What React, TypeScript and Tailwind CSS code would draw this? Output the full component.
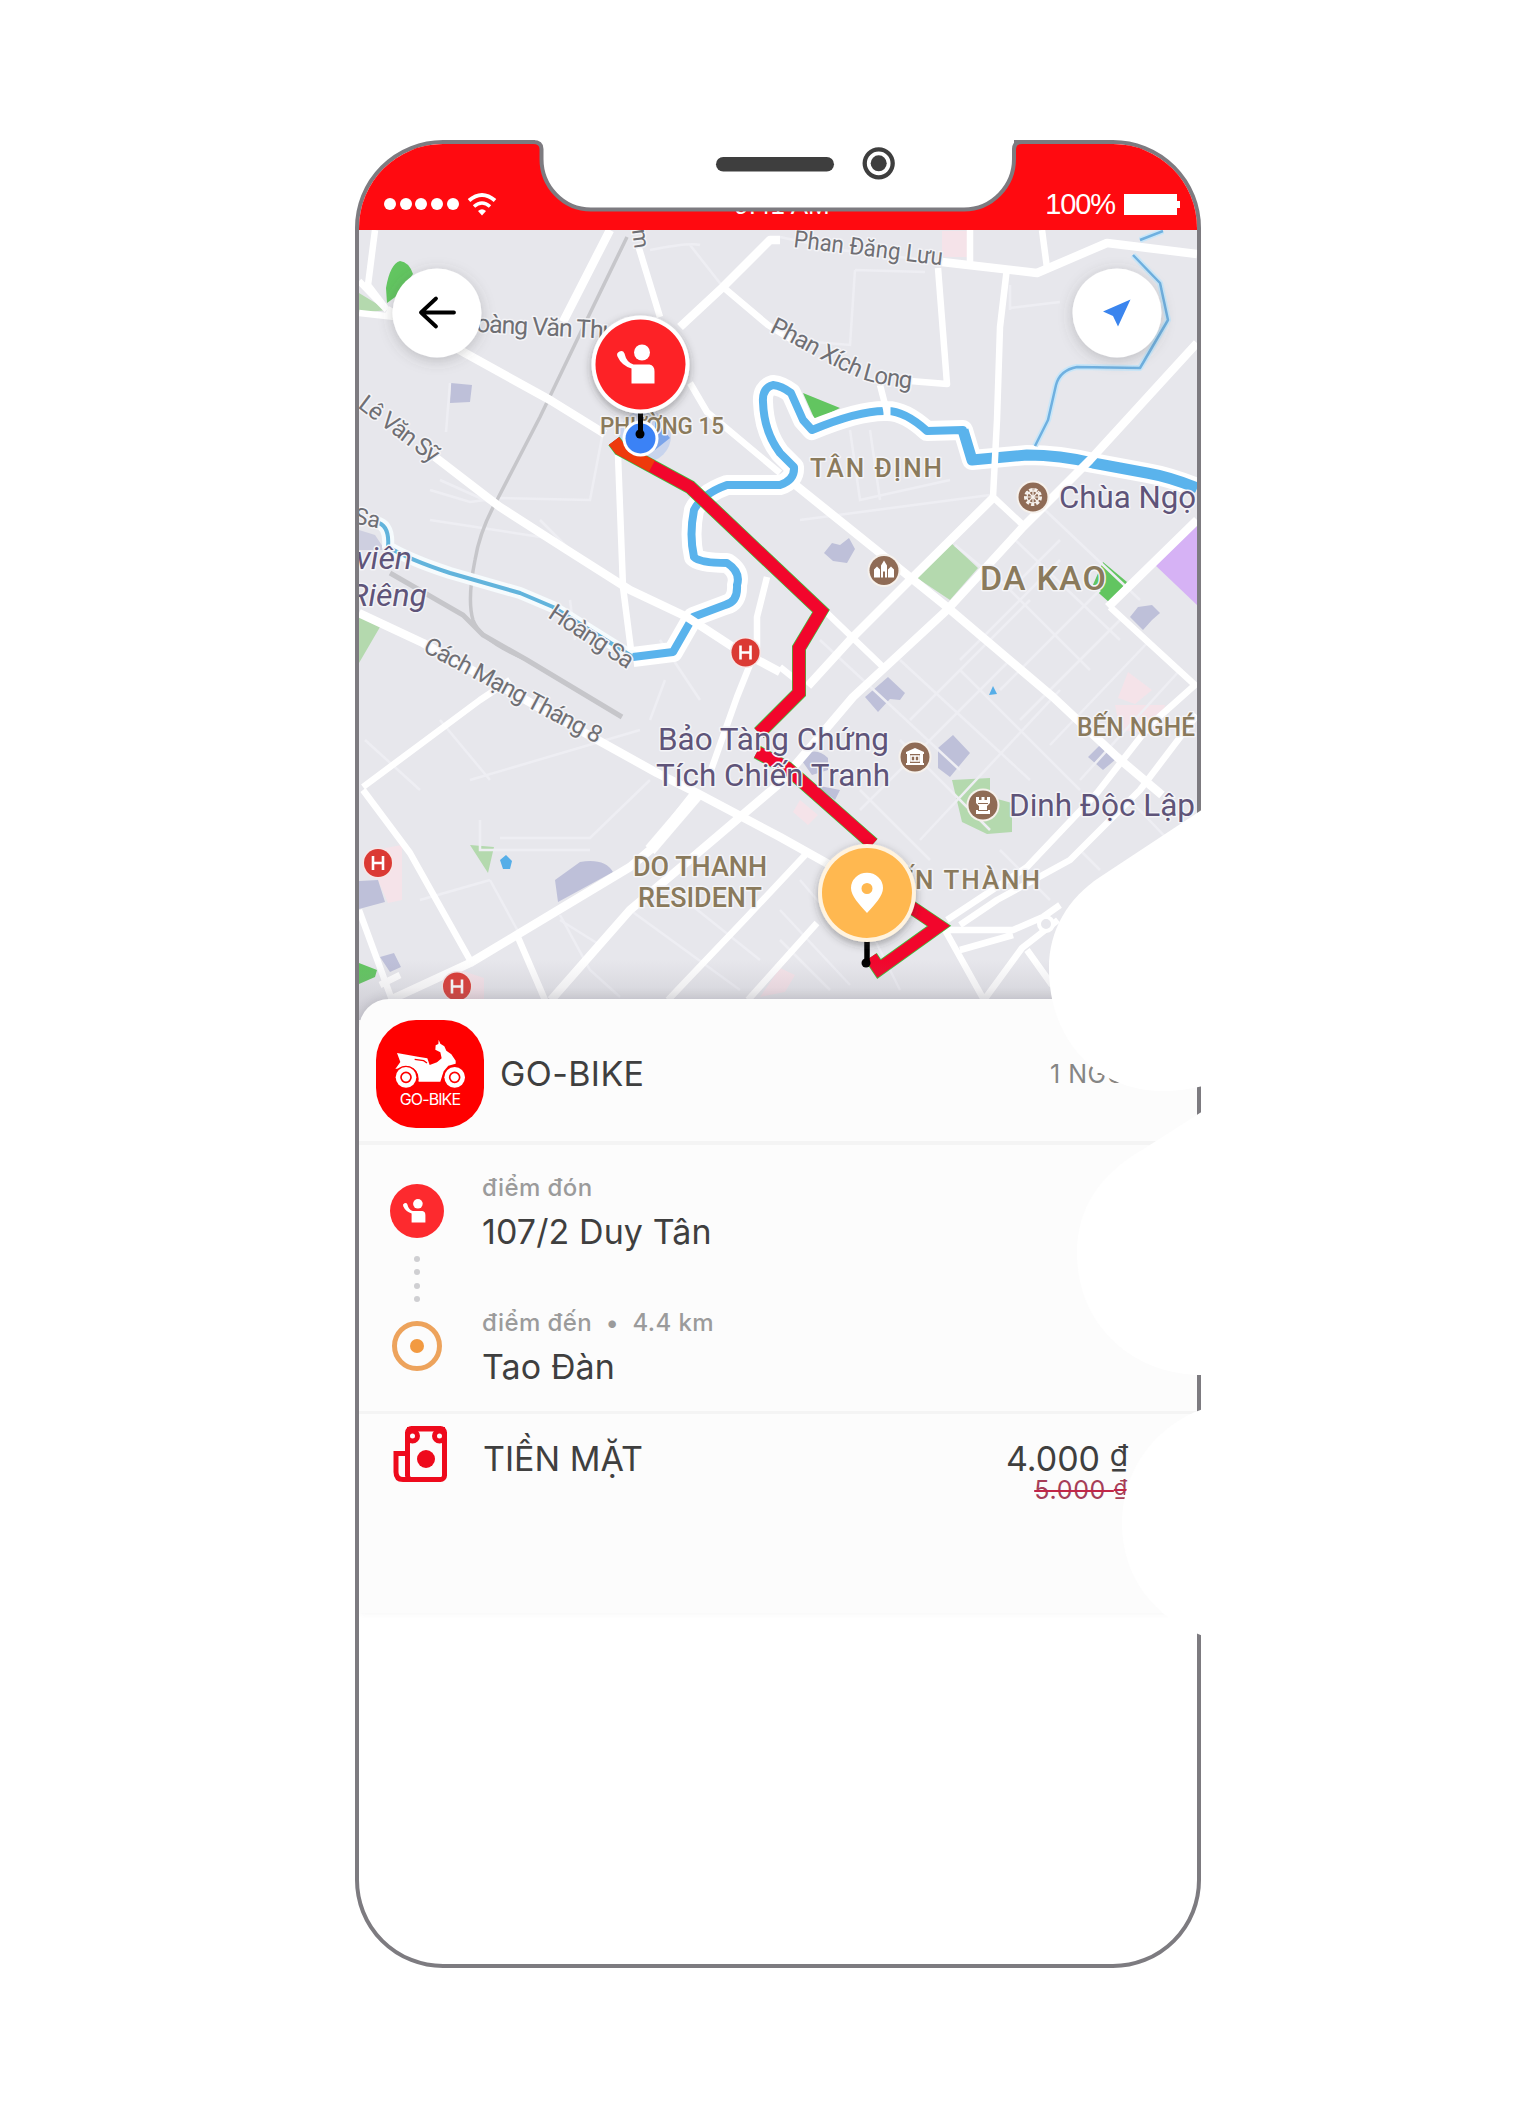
import React from "react";

const MINOR = [
  "M700 245Q690 242 650 250M690 245L723 287M780 237L840 250L942 262M855 270L850 345L790 340M855 270L925 272",
  "M1010 308L1060 302M1010 285V310M430 490L470 502L500 498L590 500L603 432M450 383L446 432M500 507L440 480",
  "M955 545L985 570M1010 535L1120 640M1045 510L1140 600M1060 560L960 660M1100 590L1000 690M990 570L1090 670M1030 600L910 720M1060 540L1010 590",
  "M820 640L960 770M900 660L1030 780M960 670L1080 790M1010 660L860 810M1060 690L920 840M900 740L990 830M860 790L930 860",
  "M470 780L640 730M650 780L590 838H500M480 820V850H590M490 880L520 935M420 900L490 880M560 915L590 970L620 997M630 910L740 990M660 880L760 960",
  "M780 910L850 985M800 880L830 915M840 870L900 990M780 940L830 990M440 720L490 780M365 740L420 790M560 920L600 945",
  "M850 430L860 500L950 480M870 430L880 500M800 520L990 495M1120 620L1020 720M1150 640L1050 745M1180 670L1080 780M1130 800L1197 870",
  "M540 520L580 560M430 520L560 540M570 600L575 640M660 640L700 700M665 680L650 720M1000 850L1050 900M1080 850L1100 870",
];

const THIN = [
  "M375 230L368 285L387 310M359 281L387 310M359 313L395 317",
  "M638 245L660 317M690 383L707 412L780 473",
  "M723 287L768 325L800 345M970 230V262M1042 230L1047 268M938 268L947 384L910 381M880 385L887 412",
  "M1007 268L1000 327L997 420L993 497L1023 525",
  "M618 455L623 587L631 650M767 577L757 617V647L737 697L710 773",
  "M510 680L480 700L363 787M363 790L410 853L470 960M359 910L392 1000M517 935L545 1000M380 985L400 975",
  "M827 613L883 667M780 667L800 683M1110 607L1195 685L1150 725L1097 793L1027 867L947 920M1197 715L1140 790L1070 860L997 900L960 925",
  "M945 930H1013L1043 917L1060 905M945 930L984 1000L1022 948L1058 920M960 950L1013 935M1027 950L1052 985",
  "M807 853L747 917L668 1000M817 923L748 1000",
];

const THICK = [
  "M610 230L563 322M780 240H770L723 287L680 327M387 310L465 353L550 400L605 434",
  "M942 262L1037 273L1107 243L1197 254",
  "M1197 343L1090 460L1023 527L947 610L853 697L780 783L693 857L630 910L551 1000",
  "M435 457L500 507L567 550L630 590L687 617L733 647L780 672",
  "M359 613L423 643L603 743L657 773L697 793L780 837L830 865",
  "M793 483L880 553L947 607L1053 697L1117 757L1162 795",
  "M994 497L913 577L850 640L808 686M1197 520L1108 607",
  "M695 793L650 850L630 867L520 933L470 963L390 1000",
];

const RIVER =
  "M1197 488Q1170 477 1147 473L1093 463Q1060 455 1027 455L972 460L963 430L927 431Q905 411 887 411Q860 410 812 430L803 420L791 393Q782 386 773 385Q762 388 763 402Q764 432 780 453L794 467Q795 480 780 485H727Q702 494 694 510Q689 535 694 557Q700 563 727 563Q741 572 737 585Q738 602 725 605L693 617L673 652L633 657";
const STREAM = "M376 522Q390 525 388 547Q410 560 450 573L520 593L553 607L633 657";
const CREEK =
  "M1163 231L1140 240M1133 255L1160 283L1168 320L1140 368L1077 367Q1060 370 1056 385L1048 420L1035 446";

const ROUTE_A = "M614 441L620 449L690 487L821 611L799 648V693L759 733";
const ROUTE_B = "M757 752L787 768L873 844";
const ROUTE_C = "M905 903L939 926L879 969L871 957";

function MapLabels() {
  return (
    <g fontFamily="Roboto, sans-serif" stroke="#f4f4f7" strokeWidth="3" strokeLinejoin="round" paintOrder="stroke">
      <g fill="#6f6f74" fontSize="24">
        <text x="793" y="247" textLength="150" lengthAdjust="spacingAndGlyphs" transform="rotate(7 793 247)">Phan Đăng Lưu</text>
        <path id="xichlong" d="M769 332C800 346 838 371 868 381Q890 387 920 389" fill="none" stroke="none" />
        <text><textPath href="#xichlong" textLength="155">Phan Xích Long</textPath></text>
        <text x="459" y="331" fontSize="25" textLength="157" transform="rotate(3 459 331)">Hoàng Văn Thụ</text>
        <text x="357" y="407" textLength="94" transform="rotate(37 357 407)">Lê Văn Sỹ</text>
        <text x="353" y="523" fontSize="23" transform="rotate(12 353 523)">Sa</text>
        <text x="547" y="617" textLength="96" transform="rotate(33 547 617)">Hoàng Sa</text>
        <text x="422" y="651" textLength="198" transform="rotate(28 422 651)">Cách Mạng Tháng 8</text>
        <text x="632" y="230" transform="rotate(82 632 230)" fontSize="22">m</text>
      </g>
      <g fill="#8a7a5c" fontWeight="500">
        <text x="600" y="434" fontSize="23" textLength="124" lengthAdjust="spacingAndGlyphs">PHƯỜNG 15</text>
        <text x="810" y="477" fontSize="26" textLength="132">TÂN ĐỊNH</text>
        <text x="980" y="590" fontSize="34" textLength="126">DA KAO</text>
        <text x="1077" y="736" fontSize="25" textLength="118" lengthAdjust="spacingAndGlyphs">BẾN NGHÉ</text>
        <text x="633" y="876" fontSize="27" textLength="134" lengthAdjust="spacingAndGlyphs">DO THANH</text>
        <text x="638" y="907" fontSize="27" textLength="124" lengthAdjust="spacingAndGlyphs">RESIDENT</text>
        <text x="880" y="889" fontSize="26" textLength="160">BẾN THÀNH</text>
      </g>
      <g fill="#5f5479" fontSize="32">
        <text x="1059" y="508" textLength="137" lengthAdjust="spacingAndGlyphs">Chùa Ngọ</text>
        <text x="658" y="750" textLength="231" lengthAdjust="spacingAndGlyphs">Bảo Tàng Chứng</text>
        <text x="656" y="786" textLength="234" lengthAdjust="spacingAndGlyphs">Tích Chiến Tranh</text>
        <text x="1009" y="816" textLength="186" lengthAdjust="spacingAndGlyphs">Dinh Độc Lập</text>
        <text x="412" y="569" textAnchor="end" fontStyle="italic">viên</text>
        <text x="427" y="606" textAnchor="end" fontStyle="italic">Riêng</text>
      </g>
    </g>
  );
}

function Hospital({ x, y }: { x: number; y: number }) {
  return (
    <g transform={`translate(${x} ${y})`}>
      <circle r="15.5" fill="#f6e6e6" />
      <circle r="14" fill="#db3a34" />
      <path d="M-5 -7V7M5 -7V7M-5 0H5" stroke="#fff" strokeWidth="2.6" fill="none" />
    </g>
  );
}

function Poi({ x, y, children }: { x: number; y: number; children: React.ReactNode }) {
  return (
    <g transform={`translate(${x} ${y})`}>
      <circle r="16.5" fill="#f6f1ec" />
      <circle r="14.5" fill="#8f6b55" />
      {children}
    </g>
  );
}

function Hailer() {
  return (
    <g fill="#fff">
      <circle cx="1.5" cy="-12" r="8" />
      <path d="M-9 19V4Q-19 1 -23 -8A3.8 3.8 0 0 1 -16 -11Q-14 -2 -7 0H9Q14 1 14 7V19Z" />
    </g>
  );
}

function CityMap() {
  return (
    <svg className="block h-[790px] w-[838px] shrink-0" viewBox="359 230 838 790">
      <defs>
        <linearGradient id="fade" x1="0" x2="0" y1="0" y2="1">
          <stop offset="0" stopColor="#8a8794" stopOpacity="0" />
          <stop offset="1" stopColor="#8a8794" stopOpacity="0.3" />
        </linearGradient>
        <filter id="drop" x="-40%" y="-40%" width="180%" height="180%">
          <feDropShadow dx="0" dy="3" stdDeviation="4" floodColor="#333" floodOpacity="0.4" />
        </filter>
        <filter id="softdrop" x="-40%" y="-40%" width="180%" height="180%">
          <feDropShadow dx="0" dy="3" stdDeviation="7" floodColor="#555" floodOpacity="0.28" />
        </filter>
      </defs>
      <rect x="359" y="230" width="838" height="790" fill="#e7e7ec" />

      <g fill="#f5e3e9">
        <path d="M942 231H968V257H942ZM385 848L402 845L402 900L388 903L378 880ZM1128 672L1152 690L1135 704L1118 698ZM1115 705H1165L1160 735L1120 730ZM800 800L818 815L808 825L793 812ZM780 968L795 975L785 992L760 997ZM460 970L484 978V1000H465Z" />
      </g>
      <g fill="#bec0d9">
        <path d="M451 383L472 385L470 402L450 403ZM824 553L832 543L840 545L849 538L855 549L847 563L833 561Z" />
        <path d="M865 697L888 677L905 693L900 700L890 699L878 712ZM1130 617L1138 607L1152 605L1160 613L1152 620L1143 630Z" />
        <path d="M953 735L970 753L950 777L938 768V748ZM1100 745L1115 760L1103 770L1088 757ZM800 758Q815 745 828 758V770L812 775ZM815 785L840 790L835 800Z" />
        <path d="M555 880L580 862Q605 858 613 872L558 902ZM359 881L378 880L385 902L359 909ZM380 957L394 953L401 967L390 972Z" />
        <path d="M359 530L375 535L385 550L359 550Z" opacity="0.6" />
      </g>
      <g fill="#b4d9ae">
        <path d="M359 293L387 310L359 313ZM950 542L978 568L950 600L917 578ZM359 613L380 627L359 663ZM470 845L494 847L488 873ZM952 780L990 778L990 797L1012 803V832L987 834L962 822Z" />
      </g>
      <g fill="#62c560">
        <path d="M387 303L386 288Q390 264 400 261Q409 262 413 274L398 295ZM803 393L840 408L815 420ZM1103 562L1127 582L1110 603L1092 587ZM359 963L377 970L375 977L359 984Z" />
      </g>
      <path d="M1197 522L1155 565L1197 605Z" fill="#d6b2f5" />
      <path d="M500 860L506 855L512 861L510 869L503 869ZM989 695L993 686L997 694Z" fill="#56aee8" />

      <g fill="none" stroke="#eeeef3" strokeWidth="2.5">
        {MINOR.map((d) => <path key={d} d={d} />)}
      </g>
      <g fill="none" stroke="#c6c6ca">
        <path d="M627 237L577 340L540 417L497 500Q480 530 475 560Q467 600 473 620Q480 640 527 660" strokeWidth="3.5" />
        <path d="M390 573L463 615L483 635L527 660L622 717" strokeWidth="5" />
      </g>

      <g fill="none" strokeLinejoin="round">
        <path d={RIVER} stroke="#fff" strokeWidth="20" />
        <path d={STREAM} stroke="#f6fbfd" strokeWidth="12" />
        <path d={CREEK} stroke="#c9e6f8" strokeWidth="6" />
        <path d={RIVER} stroke="#5ab3ec" strokeWidth="8" />
        <path d="M1197 488Q1170 477 1147 473L1093 463Q1060 455 1027 455L972 460L963 430" stroke="#5ab3ec" strokeWidth="11" />
        <path d={STREAM} stroke="#62b4dc" strokeWidth="4" />
        <path d={CREEK} stroke="#6fb0e0" strokeWidth="2.5" />
      </g>
      <g fill="none" stroke="#fff" strokeWidth="6.5" strokeLinejoin="round">
        {THIN.map((d) => <path key={d} d={d} />)}
      </g>
      <g fill="none" stroke="#fff" strokeWidth="8.5" strokeLinejoin="round">
        {THICK.map((d) => <path key={d} d={d} />)}
      </g>
      <path d="M697 795L650 850" stroke="#fff" strokeWidth="12" />
      <path d="M887 402V421" stroke="#fff" strokeWidth="7" />
      <circle cx="1046" cy="924" r="7" fill="#e7e7ec" stroke="#fff" strokeWidth="4" />

      <circle cx="645" cy="436" r="26" fill="#8fb2f0" opacity="0.35" />
      <path d="M655 420L670 438L655 450Z" fill="#7ba4ea" />
      <g fill="none">
        <path d={ROUTE_A} stroke="#3dc23d" strokeWidth="14" />
        <path d={ROUTE_B} stroke="#3dc23d" strokeWidth="14" />
        <path d={ROUTE_C} stroke="#3dc23d" strokeWidth="14" />
        <path d={ROUTE_A} stroke="#f2062c" strokeWidth="12.5" />
        <path d={ROUTE_B} stroke="#f2062c" strokeWidth="12.5" />
        <path d={ROUTE_C} stroke="#f2062c" strokeWidth="12.5" />
        <path d="M614 441L620 449L652 466" stroke="#ee3a0c" strokeWidth="12.5" />
      </g>

      <MapLabels />

      <Hospital x={745.5} y={652.5} />
      <Hospital x={378} y={863} />
      <Hospital x={457} y={986.5} />
      <Poi x={1033} y={497}>
        <circle r="7.5" fill="none" stroke="#f6f1ec" strokeWidth="3" strokeDasharray="3.2 2" />
        <circle r="6" fill="none" stroke="#f6f1ec" strokeWidth="1.2" />
        <path d="M0 -9V9M-9 0H9M-6 -6L6 6M6 -6L-6 6" stroke="#f6f1ec" strokeWidth="1.2" />
      </Poi>
      <Poi x={884} y={570.5}>
        <path d="M-10 7V-1L-7 -4L-4 -1V7ZM4 7V-1L7 -4L10 -1V7ZM-3 7V-5L0 -10L3 -5V7H1V1H-1V7Z" fill="#fff" />
      </Poi>
      <Poi x={915} y={757}>
        <path d="M-9 -3V-5L0 -9L9 -5V-3ZM-8 7V-3H-5V7ZM5 7V-3H8V7ZM-9 6H9V8H-9Z" fill="#fff" />
        <path d="M-4 -1H4V4H-4ZM0 -1V4" fill="none" stroke="#fff" strokeWidth="1.6" />
      </Poi>
      <Poi x={983} y={805}>
        <path d="M-7 -8H-4V-5H-1.5V-8H1.5V-5H4V-8H7V-2L4 1V5H7V9H-7V5H-4V1L-7 -2Z" fill="#fff" />
        <path d="M-5 -1.5H5M-5 5.5H5" stroke="#8f6b55" strokeWidth="1" />
      </Poi>

      <circle cx="640.500" cy="438.500" r="18" fill="#fff" />
      <circle cx="640.500" cy="438.500" r="15" fill="#3b82f6" />
      <path d="M640.500 410V433" stroke="#000" strokeWidth="5" />
      <circle cx="640" cy="434" r="4.500" fill="#000" />
      <g transform="translate(640.5 364.5)">
        <circle r="49" fill="#fff" filter="url(#drop)" />
        <circle r="45" fill="#fd2226" />
        <Hailer />
      </g>

      <path d="M867 940V963" stroke="#000" strokeWidth="5.500" />
      <circle cx="866" cy="963" r="4.500" fill="#000" />
      <g transform="translate(867 893)">
        <circle r="49" fill="#fff3df" filter="url(#drop)" />
        <circle r="45" fill="#ffb850" />
        <path d="M0 20C-8 11 -16 3 -16 -5A15.800 15 0 0 1 16 -5C16 3 8 11 0 20ZM0 -10A5.500 5.500 0 1 0 0 1A5.500 5.500 0 1 0 0 -10Z" fill="#fff" fillRule="evenodd" />
      </g>

      <g filter="url(#softdrop)">
        <circle cx="437" cy="313" r="44.500" fill="#fff" />
        <circle cx="1117" cy="313" r="44.500" fill="#fff" />
      </g>
      <path d="M454 312.500H421M436 298.500L421 312.500L436 326.500" fill="none" stroke="#000" strokeWidth="3.800" strokeLinecap="round" strokeLinejoin="round" />
      <path d="M1130.500 299.500L1103 311.500L1113 316L1118 326.500Z" fill="#3b85ee" />

      <rect x="359" y="960" width="838" height="60" fill="url(#fade)" />
    </svg>
  );
}

function StatusBar() {
  return (
    <div className="flex h-[86px] shrink-0 items-start justify-between bg-[#ff0a10] pt-[44px] pr-[17px] pl-[25px] text-white">
      <div className="flex h-[31px] w-[290px] items-center gap-2">
        <div className="flex gap-[3.7px]">
          {[0, 1, 2, 3, 4].map((i) => <span key={i} className="h-3 w-3 rounded-full bg-white" />)}
        </div>
        <svg className="h-[24px] w-[30px]" viewBox="0 0 30 24">
          <path d="M2 8.500Q15 -2.500 28 8.500" fill="none" stroke="#fff" strokeWidth="4" />
          <path d="M7 14.500Q15 7.500 23 14.500" fill="none" stroke="#fff" strokeWidth="3.600" />
          <path d="M11 19Q15 15.500 19 19L15 23.500Z" fill="#fff" />
        </svg>
      </div>
      <div className="font-['Liberation_Sans',sans-serif] text-[26px] leading-[34px] whitespace-nowrap">9:41 AM</div>
      <div className="flex h-[32px] w-[290px] items-center justify-end gap-[9px]">
        <span className="font-['Liberation_Sans',sans-serif] text-[29px] leading-8 tracking-[-1.1px]">100%</span>
        <div className="flex items-center">
          <span className="h-[21px] w-[53px] bg-white" />
          <span className="h-[7px] w-[3px] bg-white" />
        </div>
      </div>
    </div>
  );
}

function BikeBadge() {
  return (
    <div className="flex h-[108px] w-[108px] flex-col items-center rounded-[40px] bg-[#ff0000] pt-[18px]">
      <svg className="h-[52px] w-[74px]" viewBox="130 175 222 156">
        <path d="M142 220L205 231L233 236L240 256L262 248L276 236L272 218L257 210L258 197L266 193L267 180L272 192L284 200L290 213L305 224L318 243L318 252L296 258L282 275L272 306H207L204 284Q196 262 168 260L150 266L137 268L152 247Z" fill="#fff" />
        <path d="M195 239L222 243L232 250" fill="none" stroke="#f00" strokeWidth="4" />
        <path d="M136 282Q150 255 180 262Q204 270 205 300M280 300Q280 268 312 257" fill="none" stroke="#f00" strokeWidth="4" />
        <circle cx="169" cy="293" r="31" fill="#fff" />
        <circle cx="169" cy="293" r="15" fill="none" stroke="#f00" strokeWidth="5" />
        <circle cx="315" cy="293" r="31" fill="#fff" />
        <circle cx="315" cy="293" r="15" fill="none" stroke="#f00" strokeWidth="5" />
      </svg>
      <span className="text-[16px] leading-[19px] tracking-[-0.9px] text-white">GO-BIKE</span>
    </div>
  );
}

function CashIcon() {
  return (
    <svg className="h-[58px] w-[56px]" viewBox="392 1425 56 58">
      <g fill="none" stroke="#ee0a1c" strokeWidth="5">
        <rect x="407.500" y="1428.500" width="37" height="51" rx="4" />
        <path d="M408 1453.500H396V1472Q396 1479.500 403 1479.500H412" />
        <circle cx="412.500" cy="1436" r="5" />
        <circle cx="439.500" cy="1436" r="5" />
      </g>
      <path d="M407 1427H445V1431.500H407Z" fill="#ee0a1c" />
      <circle cx="426" cy="1459" r="9" fill="#ee0a1c" />
    </svg>
  );
}

function TripPoint({ label, name }: { label: React.ReactNode; name: string }) {
  return (
    <div className="flex h-[134.500px] flex-col gap-[9px]">
      <div className="text-[24px] leading-[30px] font-medium tracking-[0.400px] text-[#9b9b9b]">{label}</div>
      <div className="text-[34px] leading-10 tracking-[0.1px] text-[#3f3f3f]">{name}</div>
    </div>
  );
}

function BookingPanel() {
  return (
    <div className="relative -mt-[21px] h-[614px] shrink-0 rounded-tl-[30px] bg-[#fcfcfc] font-['Inter',sans-serif] shadow-[0_-3px_8px_rgba(80,75,95,0.14)]">
      <div className="flex h-[142px] items-start pt-[21px] pl-[17px]">
        <BikeBadge />
        <div className="flex h-[107px] flex-1 items-center justify-between pl-4">
          <span className="text-[34px] leading-10 tracking-[0.4px] text-[#3f3f3f]">GO-BIKE</span>
          <span className="w-[147px] text-[25px] leading-[30px] tracking-[0.5px] text-[#858585]">1 NGƯỜI</span>
        </div>
      </div>
      <div className="h-1 bg-[#f4f4f4]" />
      <div className="flex h-[266px] pt-[28px]">
        <div className="flex w-[116px] flex-col items-center pt-[11px]">
          <svg className="h-[54px] w-[54px]" viewBox="-45 -45 90 90">
            <circle r="45" fill="#fd2a2e" />
            <Hailer />
          </svg>
          <div className="flex flex-col gap-[7.300px] pt-[18px]">
            {[0, 1, 2, 3].map((i) => <span key={i} className="h-1.5 w-1.5 rounded-full bg-[#cfcfd2]" />)}
          </div>
          <div className="mt-[19.500px] flex h-[50px] w-[50px] items-center justify-center rounded-full border-[5px] border-[#eda35c]">
            <span className="h-[14px] w-[14px] rounded-full bg-[#f29a41]" />
          </div>
        </div>
        <div className="pl-[7px]">
          <TripPoint label="điểm đón" name="107/2 Duy Tân" />
          <TripPoint label={<span className="whitespace-pre">điểm đến  •  4.4 km</span>} name="Tao Đàn" />
        </div>
      </div>
      <div className="h-[3px] bg-[#f4f4f4]" />
      <div className="flex items-start pt-[11px] pr-[69px] pl-[33px]">
        <CashIcon />
        <span className="flex-1 pt-[14px] pl-[35px] text-[34px] leading-10 text-[#3f3f3f]">TIỀN MẶT</span>
        <div className="flex flex-col items-end pt-[14px]">
          <span className="text-[34px] leading-10 text-[#3f3f3f]">
            4.000 <span className="inline-block -translate-y-[5px] text-[30px] leading-none">₫</span>
          </span>
          <span className="-mt-0.5 text-[25px] leading-[26px] tracking-[0.7px] text-[#a63e58] line-through decoration-[#c22648] decoration-2">
            5.000 <span className="relative -top-1 text-[22px] leading-none">₫</span>
          </span>
        </div>
      </div>
    </div>
  );
}

/* Notch, speaker, camera and the white cut-outs along the right edge. */
function FrameOverlay() {
  return (
    <svg className="pointer-events-none absolute top-0 left-0 h-[2113px] w-[1533px]" viewBox="0 0 1533 2113">
      <path d="M535 138V142Q541 142 541.500 149V159C541.500 186 563 209.500 591 209.500H964C992 209.500 1014 186 1014 159V149Q1014 142 1020 142V138Z" fill="#fff" />
      <path d="M533 142Q541.500 142 541.500 149V159C541.500 186 563 209.500 591 209.500H964C992 209.500 1014 186 1014 159V149Q1014 142 1022 142" fill="none" stroke="#7d7b80" strokeWidth="4" />
      <path d="M1014 140H1023V143H1014Z" fill="#7d7b80" />
      <rect x="716" y="157" width="118" height="14.500" rx="7.250" fill="#3e3e3e" />
      <circle cx="878.700" cy="163.300" r="14" fill="none" stroke="#3e3e3e" strokeWidth="4.300" />
      <circle cx="878.700" cy="163.300" r="8" fill="#3e3e3e" />
      <g fill="#fff">
        <path d="M1203 809L1100 877C1068 898 1049 930 1049 968C1049 1040 1096 1091 1163 1091Q1183 1091 1203 1086Z" />
        <path d="M1203 1111L1142 1150C1100 1174 1077 1208 1077 1253C1077 1325 1132 1375 1203 1375Z" />
        <path d="M1203 1409C1157 1425 1122 1468 1122 1523C1122 1576 1153 1618 1203 1636Z" />
      </g>
    </svg>
  );
}

export default function App() {
  return (
    <div className="relative h-[2113px] w-[1533px] overflow-hidden bg-white pt-[140px] pl-[355px]">
      <div className="flex h-[1828px] w-[846px] flex-col overflow-hidden rounded-[88px] border-4 border-[#7d7b80] bg-white">
        <StatusBar />
        <CityMap />
        <BookingPanel />
      </div>
      <FrameOverlay />
    </div>
  );
}
